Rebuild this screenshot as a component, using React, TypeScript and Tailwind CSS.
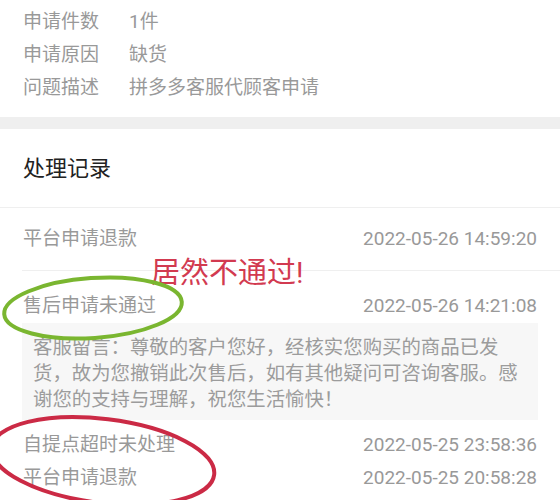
const details = [
  { label: '申请件数', value: '1件' },
  { label: '申请原因', value: '缺货' },
  { label: '问题描述', value: '拼多多客服代顾客申请' },
];

function RecordRow({ title, time }: { title: string; time: string }) {
  return (
    <div className="flex items-center justify-between px-[23px] text-[19px] leading-[26px] text-[#999]">
      <span>{title}</span>
      <span>{time}</span>
    </div>
  );
}

export default function App() {
  return (
    <div className="relative h-[500px] w-[560px] overflow-hidden bg-white font-['Roboto','Noto_Sans_CJK_SC',sans-serif]">
      {/* order details */}
      <div className="px-[23px] pb-[13px] pt-[5px]">
        {details.map((d) => (
          <div key={d.label} className="flex text-[19px] leading-[33px] text-[#999]">
            <span className="w-[106px]">{d.label}</span>
            <span>{d.value}</span>
          </div>
        ))}
      </div>

      <div className="h-[12px] bg-[#efefef]" />

      <div className="flex h-[78px] items-center px-[23px] text-[22px] text-[#222]">处理记录</div>
      <div className="h-px bg-[#efefef]" />

      <div className="flex h-[62px] flex-col justify-center">
        <RecordRow title="平台申请退款" time="2022-05-26 14:59:20" />
      </div>
      <div className="ml-[22px] h-px bg-[#efefef]" />

      <div className="pt-[22px]">
        <RecordRow title="售后申请未通过" time="2022-05-26 14:21:08" />
        <div className="mx-[22px] mt-[4px] bg-[#f7f7f7] pb-[7px] pl-[11px] pr-[14px] pt-[12px] text-[19.4px] leading-[26px] text-[#9c9c9c]">
          客服留言：尊敬的客户您好，经核实您购买的商品已发货，故为您撤销此次售后，如有其他疑问可咨询客服。感谢您的支持与理解，祝您生活愉快！
        </div>
      </div>

      <div className="mt-[12px] flex flex-col gap-[7px]">
        <RecordRow title="自提点超时未处理" time="2022-05-25 23:58:36" />
        <RecordRow title="平台申请退款" time="2022-05-25 20:58:28" />
      </div>

      {/* hand-drawn annotations */}
      <span className="absolute left-[151px] top-[253px] text-[29px] leading-[40px] text-[#d23a50]">居然不通过!</span>
      <svg className="pointer-events-none absolute left-0 top-0" width="560" height="500" viewBox="0 0 560 500">
        <ellipse cx="93" cy="308" rx="89" ry="30" fill="none" stroke="#7ab630" strokeWidth="4" transform="rotate(-4 93 308)" />
        <ellipse cx="103" cy="461" rx="112" ry="42" fill="none" stroke="#cb2a45" strokeWidth="4" transform="rotate(7 103 461)" />
      </svg>
    </div>
  );
}
